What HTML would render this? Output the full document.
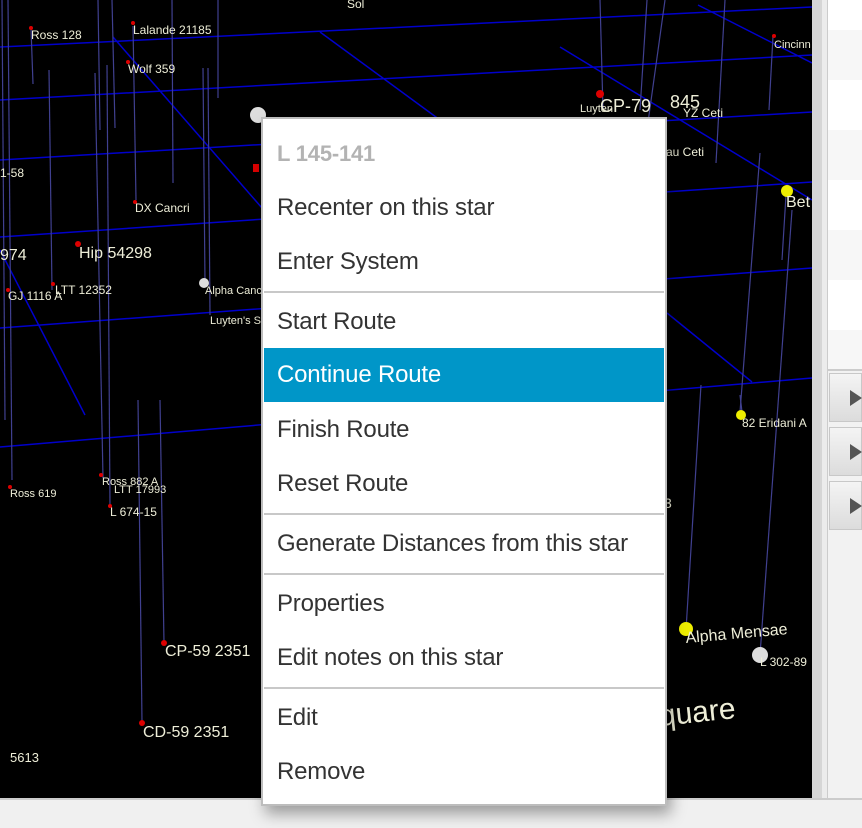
<!DOCTYPE html>
<html><head><meta charset="utf-8"><style>
body{margin:0;width:862px;height:828px;overflow:hidden;background:#f0f0f0;font-family:"Liberation Sans",Arial,sans-serif;position:relative}
#map{position:absolute;left:0;top:0;width:812px;height:798px;background:#000}
#rp{position:absolute;left:812px;top:0;width:50px;height:798px;background:#f2f2f2}
.sb{position:absolute;left:812px;top:0;width:10px;height:798px;background:#d6d6d6}
.sb2{position:absolute;left:822px;top:0;width:5px;height:798px;background:#ececec;border-right:1px solid #ccc}
.row{position:absolute;left:828px;width:34px;height:50px}
.btn{position:absolute;left:829px;width:33px;height:49px;background:linear-gradient(#f4f4f4,#dcdcdc);border:1px solid #c8c8c8;box-sizing:border-box}
.btn:after{content:"";position:absolute;left:20px;top:16px;border-left:12px solid #555;border-top:8px solid transparent;border-bottom:8px solid transparent}
#bottom{position:absolute;left:0;top:798px;width:862px;height:30px;background:#f0f0f0;border-top:2px solid #ccc;box-sizing:border-box}
#menu{position:absolute;left:261px;top:117px;width:406px;height:689px;background:#fff;border:2px solid #bdbdbd;box-sizing:border-box;box-shadow:4px 8px 14px rgba(0,0,0,.35)}
.it{position:absolute;left:0;width:402px;height:54px;line-height:54px;padding-left:14px;font-size:24px;color:#333;box-sizing:border-box;white-space:nowrap;letter-spacing:-0.2px}
.hl{background:#0096c8;color:#fff;left:1px;width:400px;padding-left:13px}
.sep{position:absolute;left:1px;width:400px;height:2px;background:#c8c8c8}
</style></head><body>
<div id="map">
<svg width="812" height="798" xmlns="http://www.w3.org/2000/svg" font-family="Liberation Sans, Arial, sans-serif" fill="#eeeed8">
<g stroke="#0000cc" stroke-width="1.5">
<line x1="0" y1="47" x2="812" y2="7"/>
<line x1="0" y1="100" x2="812" y2="55"/>
<line x1="0" y1="160" x2="812" y2="112"/>
<line x1="0" y1="237" x2="812" y2="182"/>
<line x1="0" y1="328" x2="812" y2="268"/>
<line x1="0" y1="447" x2="812" y2="378"/>
<line x1="113" y1="37" x2="262" y2="208"/>
<line x1="0" y1="250" x2="85" y2="415"/>
<line x1="320" y1="32" x2="440" y2="120"/>
<line x1="560" y1="47" x2="812" y2="200"/>
<line x1="698" y1="5" x2="812" y2="63"/>
<line x1="667" y1="313" x2="752" y2="382"/>
</g>
<g stroke="#404090" stroke-width="1.2">
<line x1="2" y1="0" x2="5" y2="420"/><line x1="8" y1="0" x2="12" y2="480"/>
<line x1="31" y1="28" x2="33" y2="84"/><line x1="49" y1="70" x2="52" y2="290"/>
<line x1="98" y1="0" x2="100" y2="130"/><line x1="112" y1="0" x2="115" y2="128"/>
<line x1="95" y1="73" x2="103" y2="478"/><line x1="107" y1="65" x2="110" y2="508"/>
<line x1="133" y1="26" x2="136" y2="200"/><line x1="172" y1="0" x2="173" y2="183"/>
<line x1="203" y1="68" x2="205" y2="283"/><line x1="208" y1="68" x2="210" y2="315"/>
<line x1="218" y1="0" x2="218" y2="98"/><line x1="138" y1="400" x2="142" y2="722"/>
<line x1="160" y1="400" x2="164" y2="643"/>
<line x1="600" y1="0" x2="603" y2="110"/><line x1="647" y1="0" x2="640" y2="110"/>
<line x1="665" y1="0" x2="640" y2="180"/><line x1="725" y1="0" x2="716" y2="163"/>
<line x1="773" y1="36" x2="769" y2="110"/><line x1="760" y1="153" x2="740" y2="412"/>
<line x1="786" y1="195" x2="782" y2="260"/><line x1="792" y1="210" x2="760" y2="655"/>
<line x1="740" y1="395" x2="742" y2="412"/><line x1="701" y1="385" x2="686" y2="630"/>
</g>
<g fill="#d00"><circle cx="31" cy="28" r="2"/><circle cx="133" cy="23" r="2"/><circle cx="128" cy="62" r="2"/><circle cx="135" cy="202" r="2"/><circle cx="78" cy="244" r="3"/><circle cx="53" cy="284" r="2"/><circle cx="8" cy="290" r="2"/><circle cx="600" cy="94" r="4"/><circle cx="10" cy="487" r="2"/><circle cx="101" cy="475" r="2"/><circle cx="110" cy="506" r="2"/><circle cx="164" cy="643" r="3"/><circle cx="142" cy="723" r="3"/><circle cx="774" cy="36" r="2"/><rect x="253" y="164" width="6" height="8"/></g>
<circle cx="258" cy="115" r="8" fill="#ddd"/><circle cx="204" cy="283" r="5" fill="#ddd"/>
<circle cx="787" cy="191" r="6" fill="#ee0"/><circle cx="741" cy="415" r="5" fill="#ee0"/><circle cx="686" cy="629" r="7" fill="#ee0"/><circle cx="760" cy="655" r="8" fill="#ddd"/>
<g font-size="12">
<text x="31" y="39">Ross 128</text><text x="133" y="34">Lalande 21185</text><text x="128" y="73">Wolf 359</text>
<text x="0" y="177">1-58</text><text x="135" y="212">DX Cancri</text><text x="8" y="300">GJ 1116 A</text><text x="55" y="294">LTT 12352</text>
<text x="205" y="294" font-size="11">Alpha Cancri</text><text x="210" y="324" font-size="11">Luyten's S</text>
<text x="347" y="8">Sol</text><text x="580" y="112" font-size="11">Luyten</text><text x="683" y="117">YZ Ceti</text><text x="666" y="156">au Ceti</text>
<text x="774" y="48" font-size="11">Cincinn</text><text x="742" y="427">82 Eridani A</text><text x="10" y="497" font-size="11">Ross 619</text>
<text x="102" y="485" font-size="11">Ross 882 A</text><text x="114" y="493" font-size="11">LTT 17993</text><text x="110" y="516">L 674-15</text>
<text x="10" y="762" font-size="13">5613</text><text x="760" y="666" font-size="12">L 302-89</text>
</g>
<g font-size="16"><text x="0" y="260">974</text><text x="79" y="258">Hip 54298</text><text x="600" y="112" font-size="18">CP-79</text><text x="670" y="108" font-size="18">845</text><text x="786" y="207">Bet</text>
<text x="165" y="656">CP-59  2351</text><text x="143" y="737">CD-59  2351</text><text x="686" y="643" transform="rotate(-5 686 643)">Alpha Mensae</text>
<text x="664" y="508" font-size="14">3</text><text x="660" y="726" font-size="30" transform="rotate(-6 660 726)">quare</text></g>
</svg>
</div>
<div id="rp"></div><div class="sb"></div><div class="sb2"></div>
<div class="row" style="top:0;height:30px;background:#fff"></div>
<div class="row" style="top:30px;background:#f7f7f7"></div>
<div class="row" style="top:80px;background:#fff"></div>
<div class="row" style="top:130px;background:#f7f7f7"></div>
<div class="row" style="top:180px;background:#fff"></div>
<div class="row" style="top:230px;background:#f7f7f7"></div>
<div class="row" style="top:280px;background:#fff"></div>
<div class="row" style="top:330px;height:39px;background:#f7f7f7;border-bottom:2px solid #ccc"></div>
<div class="btn" style="top:373px"></div><div class="btn" style="top:427px"></div><div class="btn" style="top:481px"></div>
<div id="bottom"></div>
<div id="menu">
<div class="it" style="top:8px;color:#b3b3b3;font-weight:bold;font-size:22px">L 145-141</div>
<div class="it" style="top:62px">Recenter on this star</div>
<div class="it" style="top:116px">Enter System</div>
<div class="sep" style="top:172px"></div>
<div class="it" style="top:176px">Start Route</div>
<div class="it hl" style="top:229px">Continue Route</div>
<div class="it" style="top:284px">Finish Route</div>
<div class="it" style="top:338px">Reset Route</div>
<div class="sep" style="top:394px"></div>
<div class="it" style="top:398px">Generate Distances from this star</div>
<div class="sep" style="top:454px"></div>
<div class="it" style="top:458px">Properties</div>
<div class="it" style="top:512px">Edit notes on this star</div>
<div class="sep" style="top:568px"></div>
<div class="it" style="top:572px">Edit</div>
<div class="it" style="top:626px">Remove</div>
</div>
</body></html>
